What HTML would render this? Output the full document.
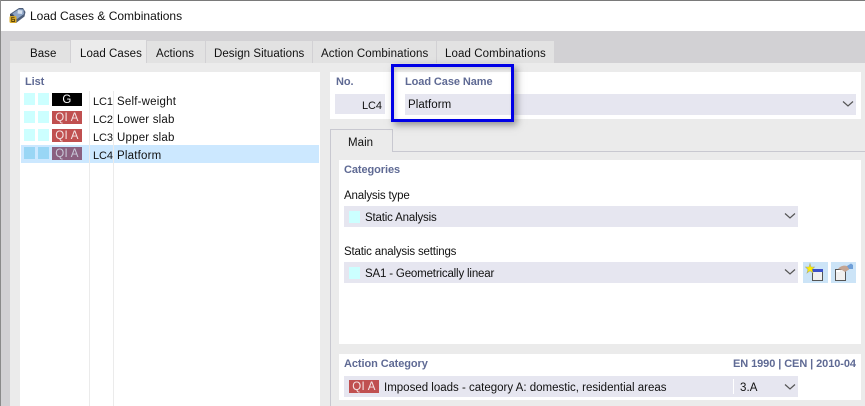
<!DOCTYPE html>
<html><head><meta charset="utf-8">
<style>
html,body{margin:0;padding:0}
body{width:865px;height:406px;overflow:hidden;position:relative;background:#d2d1d4;font-family:"Liberation Sans",sans-serif;font-size:11.5px;color:#111}
div,span.a{position:absolute}
.t{position:absolute;white-space:nowrap;line-height:14px;letter-spacing:.05px;margin-top:1px}
.h{color:#5f6a94;font-weight:bold;font-size:11px;letter-spacing:-.08px}
.lc{font-size:11px;letter-spacing:-.1px}
.n{letter-spacing:.2px}
.s{letter-spacing:-.17px}
.tab{position:absolute;top:41px;height:22px;background:#e2e2e2}
.f{position:absolute;background:#e6e6f0}
.sw{position:absolute;width:11px;height:12px;background:#ccffff}
.b{position:absolute;width:30px;height:13px;background:#c05050;color:#f4e4e4;text-align:center;line-height:14px;font-size:11.5px;letter-spacing:.3px}
</style></head><body>
<div style="left:0;top:0;width:865px;height:31px;background:#fff"></div>
<div style="left:0;top:0;width:865px;height:1px;background:#7a7a7a"></div>
<div style="left:0;top:0;width:1px;height:406px;background:#8a8a8a"></div>
<svg style="position:absolute;left:8px;top:7px" width="18" height="17" viewBox="0 0 18 17">
<path d="M2 7 L11 1 L15 1 L17.500 5 L16.500 9.500 L8 16 L3 14Z" fill="#4f5f7a"/>
<path d="M4.500 6.500 L11 2 L15.500 2.500 L16 7 L9 12Z" fill="#8ea5c6"/>
<path d="M10 3 L14.500 3.500 L14 7 L9.500 6.500Z" fill="#d5e0ee"/>
<path d="M2 7 L6 9 L7 14 L3 14Z" fill="#2f3847"/>
<rect x="1.500" y="9" width="7" height="7" rx="1.500" fill="#d9ab2a"/>
<path d="M6.500 10.300H3.700V14.500H6.500V12.300H3.700" fill="none" stroke="#5a4208" stroke-width=".9"/>
</svg>
<div class="t" style="left:30px;top:8px;font-size:12px;letter-spacing:0">Load Cases &amp; Combinations</div>

<div style="left:10px;top:63px;width:855px;height:343px;background:#ebebeb"></div>
<div class="tab" style="left:10px;width:60px"></div>
<div class="tab" style="left:71px;top:40px;width:75px;height:23px;background:#ebebeb"></div>
<div class="tab" style="left:147px;width:58px"></div>
<div class="tab" style="left:206px;width:106px"></div>
<div class="tab" style="left:313px;width:123px"></div>
<div class="tab" style="left:437px;width:117px"></div>
<div class="t" style="left:30px;top:46px">Base</div>
<div class="t" style="left:80px;top:46px">Load Cases</div>
<div class="t" style="left:156px;top:46px">Actions</div>
<div class="t" style="left:214px;top:46px">Design Situations</div>
<div class="t" style="left:321px;top:46px;letter-spacing:.1px">Action Combinations</div>
<div class="t" style="left:445px;top:46px;letter-spacing:.1px">Load Combinations</div>

<!-- List -->
<div style="left:20px;top:72px;width:300px;height:334px;background:#fff"></div>
<div class="t h" style="left:25px;top:74px">List</div>
<div style="left:21px;top:145px;width:298px;height:18px;background:#cce8ff"></div>
<div style="left:89px;top:91px;width:1px;height:315px;background:#ebebeb"></div>
<div style="left:113px;top:91px;width:1px;height:315px;background:#ebebeb"></div>
<div class="sw" style="left:24px;top:93px"></div><div class="sw" style="left:38px;top:93px"></div>
<div class="sw" style="left:24px;top:111px"></div><div class="sw" style="left:38px;top:111px"></div>
<div class="sw" style="left:24px;top:129px"></div><div class="sw" style="left:38px;top:129px"></div>
<div class="sw" style="left:24px;top:147px;background:#99d6f5"></div><div class="sw" style="left:38px;top:147px;background:#99d6f5"></div>
<div class="b" style="left:52px;top:93px;background:#000;color:#fff">G</div>
<div class="b" style="left:52px;top:111px">QI A</div>
<div class="b" style="left:52px;top:129px">QI A</div>
<div class="b" style="left:52px;top:147px;background:#8a6080;color:#c8c8d8">QI A</div>
<div class="t lc" style="left:93px;top:94px">LC1</div><div class="t n" style="left:117px;top:94px">Self-weight</div>
<div class="t lc" style="left:93px;top:112px">LC2</div><div class="t n" style="left:117px;top:112px">Lower slab</div>
<div class="t lc" style="left:93px;top:130px">LC3</div><div class="t n" style="left:117px;top:130px">Upper slab</div>
<div class="t lc" style="left:93px;top:148px">LC4</div><div class="t n" style="left:117px;top:148px">Platform</div>

<!-- Header right -->
<div style="left:330px;top:72px;width:531px;height:47px;background:#fff"></div>
<div class="t h" style="left:336px;top:74px">No.</div>
<div class="t h" style="left:405px;top:74px">Load Case Name</div>
<div class="f" style="left:335px;top:94px;width:50px;height:20px"></div>
<div class="t lc" style="left:362px;top:98px">LC4</div>
<div class="f" style="left:405px;top:94px;width:451px;height:21px"></div>
<div class="t" style="left:408px;top:97px">Platform</div>
<svg style="position:absolute;left:842px;top:100px" width="12" height="8"><path d="M1 1.500L6 6L11 1.500" fill="none" stroke="#555" stroke-width="1.200"/></svg>

<!-- Main tab -->
<div style="left:330px;top:151px;width:535px;height:1px;background:#c8c8d0"></div>
<div style="left:330px;top:129px;width:63px;height:23px;background:#ebebeb;border:1px solid #c8c8d0;border-bottom:none;box-sizing:border-box"></div>
<div style="left:330px;top:152px;width:1px;height:254px;background:#c8c8d0"></div>
<div class="t" style="left:348px;top:135px">Main</div>

<div style="left:339px;top:160px;width:522px;height:184px;background:#fff"></div>
<div class="t h" style="left:344px;top:162px">Categories</div>
<div class="t s" style="left:344px;top:188px">Analysis type</div>
<div class="f" style="left:344px;top:206px;width:454px;height:21px"></div>
<div class="sw" style="left:349px;top:211px"></div>
<div class="t s" style="left:365px;top:210px">Static Analysis</div>
<svg style="position:absolute;left:784px;top:212px" width="12" height="8"><path d="M1 1.500L6 6L11 1.500" fill="none" stroke="#555" stroke-width="1.200"/></svg>
<div class="t s" style="left:344px;top:244px">Static analysis settings</div>
<div class="f" style="left:344px;top:262px;width:454px;height:21px"></div>
<div class="sw" style="left:349px;top:267px"></div>
<div class="t s" style="left:365px;top:266px">SA1 - Geometrically linear</div>
<svg style="position:absolute;left:784px;top:268px" width="12" height="8"><path d="M1 1.500L6 6L11 1.500" fill="none" stroke="#555" stroke-width="1.200"/></svg>

<div style="left:803px;top:262px;width:25px;height:21px;background:#cce4f7"></div>
<div style="left:831px;top:262px;width:25px;height:21px;background:#cce4f7"></div>
<svg style="position:absolute;left:803px;top:262px" width="53" height="21" viewBox="0 0 53 21">
<rect x="9.500" y="7.500" width="10" height="11" fill="#f0f0f0" stroke="#555"/>
<rect x="10" y="7" width="10" height="3" fill="#3a50c8"/>
<path d="M7 1.500L8 5L11.500 5L9 7.500L10 11L7 8.800L4 11L5 7.500L2.500 5L6 5Z" fill="#ffee00" stroke="#b0b070" stroke-width=".6"/>
<rect x="32.500" y="7.500" width="10" height="11" fill="#f0f0f0" stroke="#555"/>
<rect x="33" y="8" width="4" height="2" fill="#fff"/>
<path d="M35 7C37 4 41 3 44 4L47 3.500L46 7.500L42 10L39 8Z" fill="#c4a593"/>
<path d="M44 4L48 1.500L50 3V7L46 7Z" fill="#6f9fd8"/>
</svg>

<!-- Action Category -->
<div style="left:339px;top:354px;width:522px;height:46px;background:#fff"></div>
<div class="t h" style="left:344px;top:356px">Action Category</div>
<div class="t h" style="left:733px;top:356px">EN 1990 | CEN | 2010-04</div>
<div class="f" style="left:344px;top:376px;width:454px;height:21px"></div>
<div class="b" style="left:349px;top:380px">QI A</div>
<div class="t" style="left:384px;top:380px;letter-spacing:0">Imposed loads - category A: domestic, residential areas</div>
<div style="left:733px;top:379px;width:1px;height:15px;background:#fff"></div>
<div class="t" style="left:740px;top:380px">3.A</div>
<svg style="position:absolute;left:784px;top:383px" width="12" height="8"><path d="M1 1.500L6 6L11 1.500" fill="none" stroke="#555" stroke-width="1.200"/></svg>

<!-- Highlight -->
<div style="left:391px;top:64px;width:123px;height:58px;box-sizing:border-box;border:3px solid #0000e6;box-shadow:3px 3px 7px rgba(70,70,70,.55),inset 2px 2px 4px rgba(90,90,90,.25)"></div>
</body></html>
